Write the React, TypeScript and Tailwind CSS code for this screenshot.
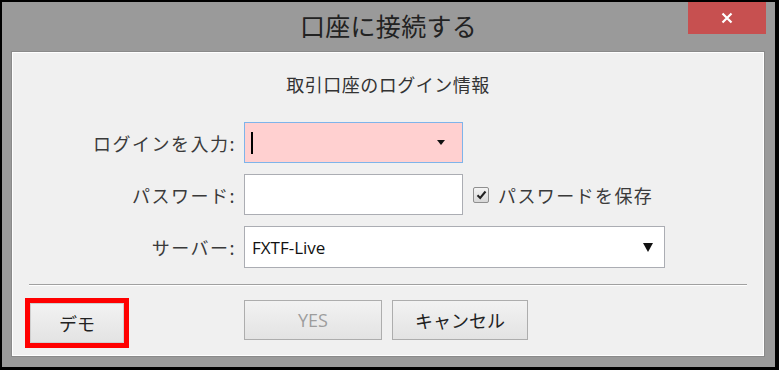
import React from "react";

const jp = { fontFamily: '"Noto Sans CJK JP", "Noto Sans", sans-serif' };

const Label: React.FC<{ text: string }> = ({ text }) => (
  <div className="w-[224px] shrink-0 text-right text-[18px] leading-none tracking-[1.5px] text-[#3a3a3a]">
    {text}
  </div>
);

const WinButton: React.FC<{ label: string; disabled?: boolean; className?: string }> = ({
  label,
  disabled,
  className = "",
}) => (
  <button
    className={`flex h-[40px] items-center justify-center border border-[#adadad] bg-gradient-to-b from-[#f2f2f2] to-[#e3e3e3] text-[18px] ${
      disabled ? "text-[#9d9d9d]" : "text-[#222]"
    } ${className}`}
  >
    {label}
  </button>
);

export default function App() {
  return (
    <div className="h-[370px] w-[779px] bg-black pb-[3px] pl-[2px] pr-[4px] pt-[2px]" style={jp}>
      <div className="flex h-full flex-col bg-[#9a9a9a]">
        {/* title bar */}
        <div className="relative flex h-[49px] shrink-0 items-center justify-center">
          <span className="pb-[3px] text-[25px] leading-none tracking-[0.3px] text-[#222]">口座に接続する</span>
          <button className="absolute right-[9px] top-0 flex h-[32px] w-[78px] items-center justify-center bg-[#c75050]">
            <svg width="12" height="12" viewBox="0 0 12 12">
              <path d="M1.5 1.5 L10.5 10.5 M10.5 1.5 L1.5 10.5" stroke="#fff" strokeWidth="2.2" />
            </svg>
          </button>
        </div>

        {/* content panel */}
        <div className="mb-[10px] ml-[9px] mr-[10px] flex flex-1 flex-col border border-[#8a8a8a] bg-[#f0f0f0] shadow-[inset_1px_1px_0_#ffffff,inset_-1px_-1px_0_#ffffff]">
          <div className="pt-[23px] text-center text-[18px] leading-none tracking-[0.5px] text-[#333]">
            取引口座のログイン情報
          </div>

          <div className="mt-[29px] flex flex-col gap-[11px]">
            {/* login */}
            <div className="flex items-center gap-[8px]">
              <Label text="ログインを入力:" />
              <div className="flex h-[41px] w-[219px] items-center justify-between border border-[#7eb4ea] bg-[#ffd0d0] pl-[6px] pr-[17px]">
                <div className="h-[22px] w-[2px] bg-black" />
                <svg width="8" height="5" viewBox="0 0 8 5">
                  <path d="M0 0 H8 L4 5 Z" fill="#111" />
                </svg>
              </div>
            </div>

            {/* password */}
            <div className="flex items-center gap-[8px]">
              <Label text="パスワード:" />
              <div className="h-[41px] w-[219px] border border-[#abadb3] bg-white" />
              <div className="ml-[2px] flex items-center gap-[9px]">
                <div className="flex h-[16px] w-[16px] items-center justify-center rounded-[2px] border border-[#8f8f8f] bg-gradient-to-b from-[#f4f4f4] to-[#d8d8d8]">
                  <svg width="11" height="10" viewBox="0 0 11 10">
                    <path d="M1.5 5.2 L4.2 8 L9.5 1.5" stroke="#222" strokeWidth="2" fill="none" />
                  </svg>
                </div>
                <span className="text-[18px] leading-none tracking-[1.4px] text-[#3a3a3a]">パスワードを保存</span>
              </div>
            </div>

            {/* server */}
            <div className="flex items-center gap-[8px]">
              <Label text="サーバー:" />
              <div className="flex h-[42px] w-[421px] items-center justify-between border border-[#abadb3] bg-white pl-[7px] pr-[11px]">
                <span
                  className="text-[17px] leading-none text-[#111]"
                  style={{ fontFamily: '"Open Sans", "Noto Sans", sans-serif' }}
                >
                  FXTF-Live
                </span>
                <svg width="10" height="10" viewBox="0 0 10 10">
                  <path d="M0 1 H10 L5 10 Z" fill="#111" />
                </svg>
              </div>
            </div>
          </div>

          {/* separator */}
          <div className="mx-[17px] mt-[16px] h-[2px] border-t border-[#a0a0a0] border-b border-b-white" />

          {/* buttons */}
          <div className="mt-[14px] flex items-start">
            <div className="ml-[13px] mt-[-2px] border-[5px] border-[#ff0000]">
              <WinButton label="デモ" className="h-[35px] w-[94px] border-[#cfcfcf]" />
            </div>
            <WinButton label="YES" disabled className="ml-[115px] w-[138px] font-[Open_Sans]" />
            <WinButton label="キャンセル" className="ml-[10px] w-[136px]" />
          </div>
        </div>
      </div>
    </div>
  );
}
